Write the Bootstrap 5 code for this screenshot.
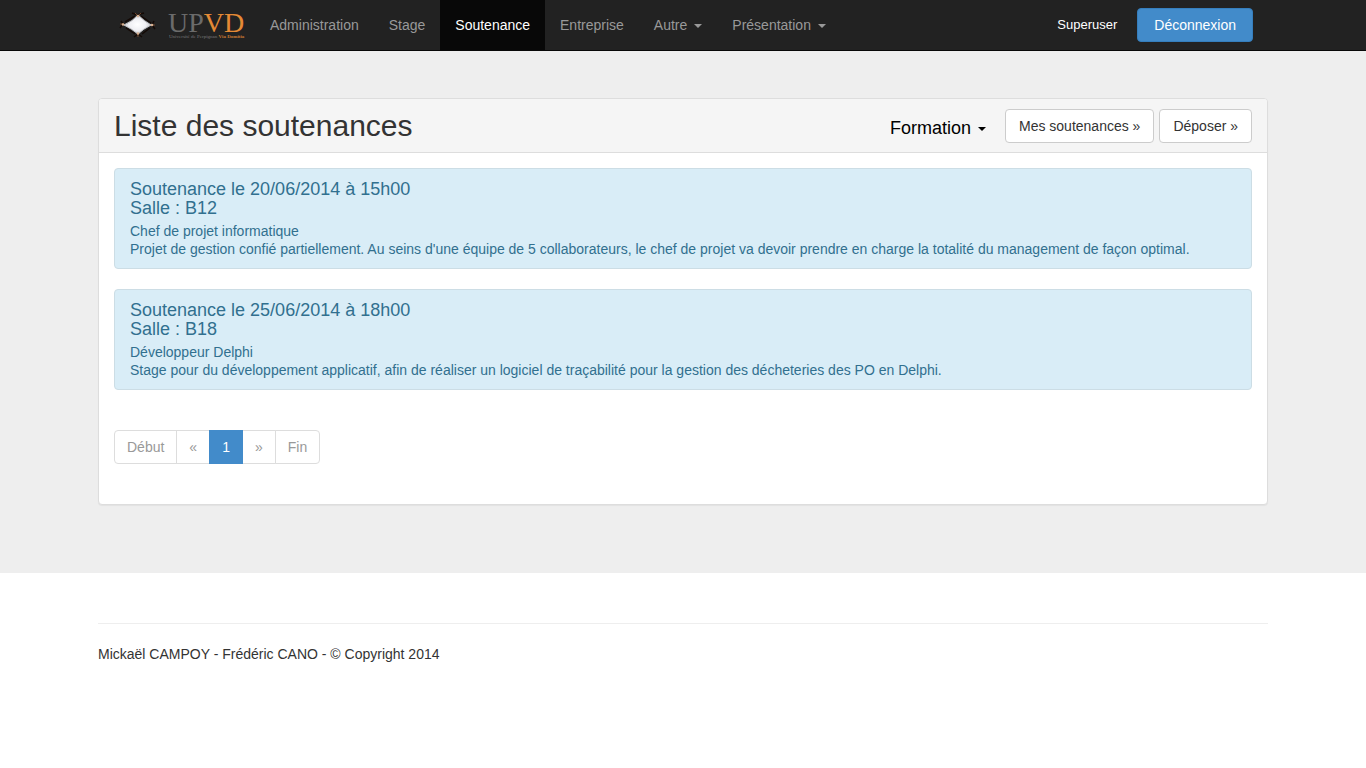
<!DOCTYPE html>
<html lang="fr">
<head>
<meta charset="utf-8">
<meta name="viewport" content="width=device-width, initial-scale=1">
<title>Liste des soutenances</title>
<link href="https://cdn.jsdelivr.net/npm/bootstrap@5.3.0/dist/css/bootstrap.min.css" rel="stylesheet">
<style>
  body { font-family: "Liberation Sans", Arial, sans-serif; font-size: 14px; line-height: 20px; color: #333; background: #fff; }
  .container { max-width: 1200px; padding-left: 15px; padding-right: 15px; }
  .site-nav { background: #222; border-bottom: 1px solid #080808; padding: 0; }
  .site-nav .navbar-brand { padding: 0; margin: 0; width: 157px; }
  .site-nav .navbar-nav .nav-link { padding: 15px; line-height: 20px; color: #999; }
  .site-nav .navbar-nav .nav-link:hover { color: #fff; }
  .site-nav .navbar-nav .nav-link.active { color: #fff; background: #080808; }
  .dropdown-toggle::after { border-top: 4px solid; border-right: 4px solid transparent; border-left: 4px solid transparent; margin-left: 7px; vertical-align: middle; }
  .user-link { font-size: 13px; color: #fff; text-decoration: none; margin-right: 20px; }
  .nav-account { padding-right: 15px; }
  .btn { font-size: 14px; line-height: 20px; padding: 6px 13px; border-radius: 4px; }
  .btn-logout { --bs-btn-color: #fff; --bs-btn-bg: #428bca; --bs-btn-border-color: #357ebd; --bs-btn-hover-color: #fff; --bs-btn-hover-bg: #3276b1; padding: 6px 16px; }
  .btn-plain { --bs-btn-color: #333; --bs-btn-bg: #fff; --bs-btn-border-color: #ccc; --bs-btn-hover-bg: #ebebeb; }
  .hero { background: #eee; padding: 47px 0 68px; }
  .panel { --bs-card-border-color: #ddd; --bs-card-border-radius: 4px; --bs-card-inner-border-radius: 3px; --bs-card-cap-bg: #f5f5f5; box-shadow: 0 1px 1px rgba(0,0,0,.05); }
  .panel > .card-header { padding: 10px 15px 9px; border-color: #ddd; }
  .panel > .card-body { padding: 15px 15px 40px; }
  .panel-tools { gap: 5px; }
  h1 { font-size: 30px; line-height: 34px; font-weight: 400; margin: 0; }
  .filter-toggle { font-size: 18px; line-height: 20px; color: #000; background: none; border: 0; padding: 4px 0 0; margin-right: 14px; }
  .session { color: #31708f; background: #d9edf7; border: 1px solid #ccdde5; border-radius: 4px; padding: 11px 15px 10px; margin-bottom: 20px; text-decoration: none; }
  .session h2 { font-size: 18px; line-height: 19px; font-weight: 400; margin: 0 0 4px; }
  .session p { line-height: 18px; margin: 0; }
  .pagination { --bs-pagination-font-size: 14px; --bs-pagination-padding-x: 12px; --bs-pagination-padding-y: 6px; --bs-pagination-color: #999; --bs-pagination-border-color: #ddd; --bs-pagination-border-radius: 4px; --bs-pagination-disabled-color: #999; --bs-pagination-disabled-bg: #fff; --bs-pagination-disabled-border-color: #ddd; --bs-pagination-active-bg: #428bca; --bs-pagination-active-border-color: #428bca; margin: 40px 0 0; }
  footer hr { margin: 50px 0 20px; color: #eee; opacity: 1; }
</style>
</head>
<body>
<nav class="navbar navbar-expand-lg site-nav">
  <div class="container">
    <a class="navbar-brand" href="#" aria-label="UPVD">
      <svg class="d-block" width="150" height="50" viewBox="0 0 150 50" aria-hidden="true">
        <defs>
          <radialGradient id="glow"><stop offset="0" stop-color="#fff"/><stop offset=".6" stop-color="#f0f0f4"/><stop offset="1" stop-color="#c4c4c8"/></radialGradient>
        </defs>
        <path d="M34 13l5 2 7-2M36 37l4-3 4 3M23 21l2 3-3 4M56 21l-2 4 3 4M27 22l10-6M43 16l10 7M28 28l9 6M44 34l8-6" fill="none" stroke="#140a06" stroke-width="1.500"/>
        <path d="M40 15q6 6 13 10-8 4-13 9-6-5-14-9 9-4 14-10z" fill="url(#glow)" stroke="#c4c4c8" stroke-width="1"/>
        <path d="M37 13l3 3 3-3M22 24h4M53 25h4M40 33v4" fill="none" stroke="#6e452a" stroke-width="1"/>
        <g fill="#d6b091"><circle cx="40" cy="16" r="1.300"/><circle cx="25" cy="24.500" r="1.300"/><circle cx="54" cy="25" r="1.300"/><circle cx="40" cy="33.500" r="1.300"/></g>
        <text x="70" y="32" font-family="Liberation Serif, serif" font-size="28" fill="#6b6b6b">UP<tspan fill="#e58a35">VD</tspan></text>
        <text x="71" y="38" font-family="Liberation Serif, serif" font-size="5" fill="#777">Université de Perpignan <tspan fill="#c87932" font-weight="bold">Via Domitia</tspan></text>
      </svg>
    </a>
    <button class="navbar-toggler navbar-dark" type="button" data-bs-toggle="collapse" data-bs-target="#menu" aria-controls="menu" aria-label="Menu"><span class="navbar-toggler-icon"></span></button>
    <div class="collapse navbar-collapse" id="menu">
      <ul class="navbar-nav me-auto">
        <li class="nav-item"><a class="nav-link" href="#">Administration</a></li>
        <li class="nav-item"><a class="nav-link" href="#">Stage</a></li>
        <li class="nav-item"><a class="nav-link active" aria-current="page" href="#">Soutenance</a></li>
        <li class="nav-item"><a class="nav-link" href="#">Entreprise</a></li>
        <li class="nav-item"><a class="nav-link dropdown-toggle" href="#" role="button">Autre</a></li>
        <li class="nav-item"><a class="nav-link dropdown-toggle" href="#" role="button">Présentation</a></li>
      </ul>
      <div class="d-flex align-items-center nav-account">
        <a class="user-link" href="#">Superuser</a>
        <button class="btn btn-logout" type="button">Déconnexion</button>
      </div>
    </div>
  </div>
</nav>

<main class="hero">
  <div class="container">
    <section class="card panel">
      <div class="card-header d-flex flex-wrap align-items-center justify-content-between">
        <h1>Liste des soutenances</h1>
        <div class="d-flex flex-wrap align-items-center panel-tools">
          <button class="filter-toggle dropdown-toggle" type="button">Formation</button>
          <button class="btn btn-plain" type="button">Mes soutenances »</button>
          <button class="btn btn-plain" type="button">Déposer »</button>
        </div>
      </div>
      <div class="card-body">
        <a class="session d-block" href="#">
          <h2>Soutenance le 20/06/2014 à 15h00<br>Salle : B12</h2>
          <p>Chef de projet informatique<br>Projet de gestion confié partiellement. Au seins d'une équipe de 5 collaborateurs, le chef de projet va devoir prendre en charge la totalité du management de façon optimal.</p>
        </a>
        <a class="session d-block" href="#">
          <h2>Soutenance le 25/06/2014 à 18h00<br>Salle : B18</h2>
          <p>Développeur Delphi<br>Stage pour du développement applicatif, afin de réaliser un logiciel de traçabilité pour la gestion des décheteries des PO en Delphi.</p>
        </a>
        <nav aria-label="Pages">
          <ul class="pagination">
            <li class="page-item disabled"><a class="page-link" href="#">Début</a></li>
            <li class="page-item disabled"><a class="page-link" href="#">«</a></li>
            <li class="page-item active"><a class="page-link" href="#" aria-current="page">1</a></li>
            <li class="page-item disabled"><a class="page-link" href="#">»</a></li>
            <li class="page-item disabled"><a class="page-link" href="#">Fin</a></li>
          </ul>
        </nav>
      </div>
    </section>
  </div>
</main>

<footer>
  <div class="container">
    <hr>
    <p>Mickaël CAMPOY - Frédéric CANO - © Copyright 2014</p>
  </div>
</footer>
<script src="https://cdn.jsdelivr.net/npm/bootstrap@5.3.0/dist/js/bootstrap.bundle.min.js"></script>
</body>
</html>
